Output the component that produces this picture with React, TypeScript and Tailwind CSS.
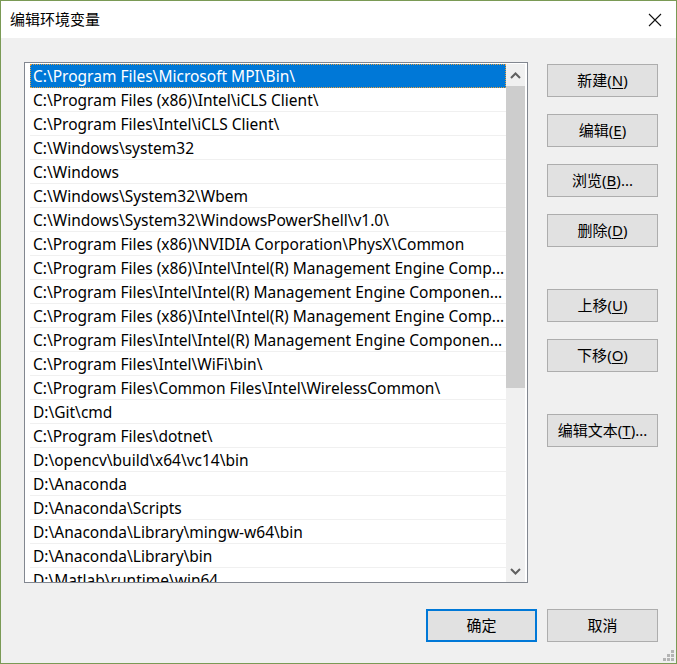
import React from 'react'

const paths = [
  'C:\\Program Files\\Microsoft MPI\\Bin\\',
  'C:\\Program Files (x86)\\Intel\\iCLS Client\\',
  'C:\\Program Files\\Intel\\iCLS Client\\',
  'C:\\Windows\\system32',
  'C:\\Windows',
  'C:\\Windows\\System32\\Wbem',
  'C:\\Windows\\System32\\WindowsPowerShell\\v1.0\\',
  'C:\\Program Files (x86)\\NVIDIA Corporation\\PhysX\\Common',
  'C:\\Program Files (x86)\\Intel\\Intel(R) Management Engine Comp...',
  'C:\\Program Files\\Intel\\Intel(R) Management Engine Componen...',
  'C:\\Program Files (x86)\\Intel\\Intel(R) Management Engine Comp...',
  'C:\\Program Files\\Intel\\Intel(R) Management Engine Componen...',
  'C:\\Program Files\\Intel\\WiFi\\bin\\',
  'C:\\Program Files\\Common Files\\Intel\\WirelessCommon\\',
  'D:\\Git\\cmd',
  'C:\\Program Files\\dotnet\\',
  'D:\\opencv\\build\\x64\\vc14\\bin',
  'D:\\Anaconda',
  'D:\\Anaconda\\Scripts',
  'D:\\Anaconda\\Library\\mingw-w64\\bin',
  'D:\\Anaconda\\Library\\bin',
  'D:\\Matlab\\runtime\\win64',
]

const font = { fontFamily: '"Noto Sans", "Noto Sans CJK SC", sans-serif' }

function Btn({ label, hot, rest = '', primary = false }: { label: string; hot?: string; rest?: string; primary?: boolean }) {
  return (
    <button
      className={
        'w-[111px] h-[33px] bg-[#e1e1e1] text-[15px] text-black flex items-center justify-center ' +
        (primary ? 'border-2 border-[#0078d7]' : 'border border-[#adadad]')
      }
    >
      {label}
      {hot && (
        <>
          (<span className="underline underline-offset-2">{hot}</span>){rest}
        </>
      )}
    </button>
  )
}

export default function App() {
  return (
    <div className="w-[677px] h-[664px] border border-[#7a9a55] bg-[#f0f0f0] flex flex-col relative" style={font}>
      {/* Title bar */}
      <div className="h-[37px] bg-white flex items-center justify-between pl-[9px] pr-[12px] shrink-0">
        <span className="text-[15px] text-black">编辑环境变量</span>
        <svg width="14" height="14" viewBox="0 0 14 14" className="mr-[2px]">
          <path d="M1 1 L13 13 M13 1 L1 13" stroke="#111" strokeWidth="1.1" />
        </svg>
      </div>

      <div className="flex pl-[23px] pt-[24px]">
        {/* List box */}
        <div className="w-[504px] h-[521px] border border-[#828790] bg-white flex pt-[1px] pr-[2px] overflow-hidden">
          <div className="flex-1 pl-[5px] overflow-hidden">
            {paths.map((p, i) => (
              <div
                key={i}
                className={
                  'h-[24px] flex items-center pt-[2px] text-[15.5px] whitespace-nowrap overflow-hidden ' +
                  (i === 0 ? 'bg-[#0078d7] text-white outline-1 outline-dotted outline-[#e6a040] -outline-offset-1' : 'text-black border-b border-[#f0f0f0]')
                }
              >
                <span className="pl-[3px]">{p}</span>
              </div>
            ))}
          </div>
          {/* Scrollbar */}
          <div className="w-[19px] bg-[#f0f0f0] flex flex-col items-center">
            <div className="h-[22px] w-full flex items-center justify-center">
              <svg width="11" height="7" viewBox="0 0 11 7">
                <path d="M1 6 L5.5 1.5 L10 6" stroke="#606060" strokeWidth="2" fill="none" />
              </svg>
            </div>
            <div className="w-full h-[302px] bg-[#cdcdcd]" />
            <div className="flex-1" />
            <div className="h-[22px] w-full flex items-center justify-center">
              <svg width="11" height="7" viewBox="0 0 11 7">
                <path d="M1 1 L5.5 5.5 L10 1" stroke="#606060" strokeWidth="2" fill="none" />
              </svg>
            </div>
          </div>
        </div>

        {/* Side buttons */}
        <div className="flex flex-col ml-[19px] pt-[2px] text-[15px]">
          <Btn label="新建" hot="N" />
          <div className="h-[17px]" />
          <Btn label="编辑" hot="E" />
          <div className="h-[17px]" />
          <Btn label="浏览" hot="B" rest="..." />
          <div className="h-[17px]" />
          <Btn label="删除" hot="D" />
          <div className="h-[42px]" />
          <Btn label="上移" hot="U" />
          <div className="h-[17px]" />
          <Btn label="下移" hot="O" />
          <div className="h-[42px]" />
          <Btn label="编辑文本" hot="T" rest="..." />
        </div>
      </div>

      {/* Bottom buttons */}
      <div className="flex justify-end gap-[10px] pr-[18px] pt-[26px]">
        <Btn label="确定" primary />
        <Btn label="取消" />
      </div>

      {/* Resize grip */}
      <svg width="11" height="11" viewBox="0 0 11 11" className="absolute right-[2px] bottom-[2px]">
        <rect x="8" y="0" width="3" height="3" fill="#b4b4b4" />
        <rect x="4" y="4" width="3" height="3" fill="#b4b4b4" />
        <rect x="8" y="4" width="3" height="3" fill="#b4b4b4" />
        <rect x="0" y="8" width="3" height="3" fill="#b4b4b4" />
        <rect x="4" y="8" width="3" height="3" fill="#b4b4b4" />
        <rect x="8" y="8" width="3" height="3" fill="#b4b4b4" />
      </svg>
    </div>
  )
}
